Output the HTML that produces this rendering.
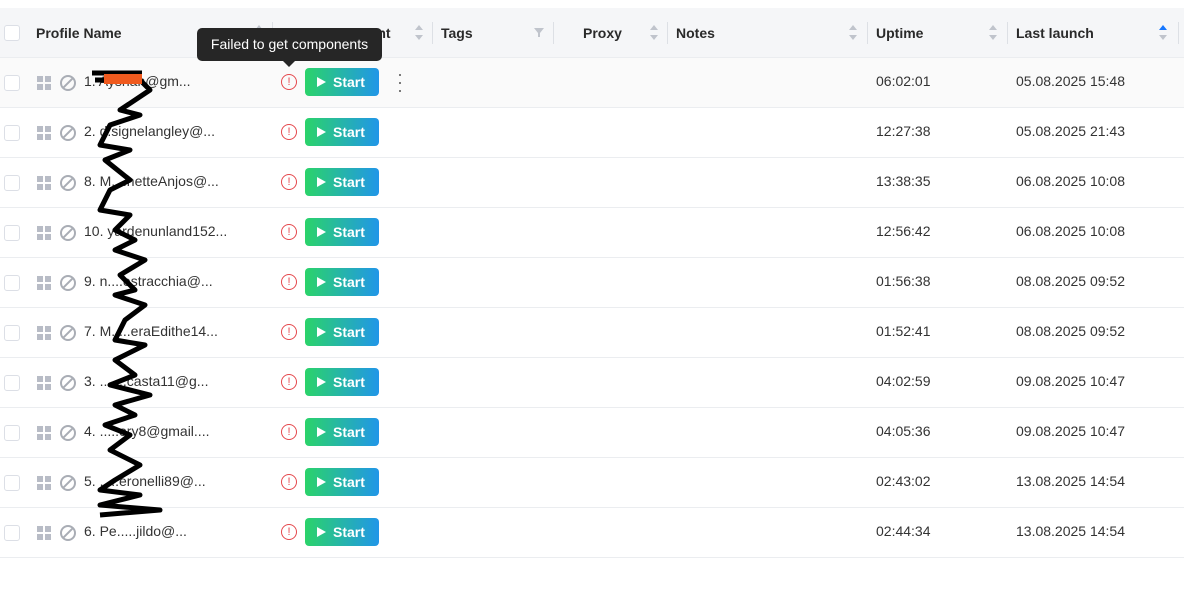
<!DOCTYPE html><html><head><style>
body{margin:0;width:1186px;height:593px;background:#fff;font-family:"Liberation Sans",sans-serif;position:relative;overflow:hidden;color:#333}
.hdr{position:absolute;left:0;top:8px;width:1184px;height:49px;background:#f5f6f8;border-bottom:1px solid #ebedf0}
.h{position:absolute;top:24px;font-size:14px;font-weight:bold;color:#2a2a2a}
.sep{position:absolute;top:22px;width:1px;height:22px;background:#dde0e5}
.row{position:absolute;left:0;width:1184px;height:49px;border-bottom:1px solid #ebedf0;font-size:14px}
.cb{position:absolute;left:4px;top:17px;width:14px;height:14px;border:1px solid #dcdfe6;border-radius:3px;background:#fff}
.grid{position:absolute;left:37px;top:18px;width:14px;height:14px}
.grid i{position:absolute;width:6px;height:6px;background:#b8bcc6}
.ban{position:absolute;left:60px;top:17px;width:12px;height:12px;border:2px solid #a9adb5;border-radius:50%}
.ban:after{content:"";position:absolute;left:5px;top:-1px;width:2px;height:14px;background:#a9adb5;transform:rotate(45deg)}
.nm{position:absolute;left:84px;top:15px;color:#333}
.al{position:absolute;left:281px;top:16px;width:14px;height:14px;border:1.5px solid #e5484d;border-radius:50%;color:#e5484d;font-size:11px;text-align:center;line-height:14px}
.st{position:absolute;left:305px;top:10px;width:74px;height:28px;border-radius:4px;background:linear-gradient(90deg,#2bd36a,#2196e8);color:#fff;font-weight:bold;font-size:14px;line-height:28px}
.st:before{content:"";position:absolute;left:12px;top:9px;border-left:9px solid #fff;border-top:5px solid transparent;border-bottom:5px solid transparent}
.st span{position:absolute;left:28px}
.up{position:absolute;left:876px;top:15px}
.ll{position:absolute;left:1016px;top:15px}
.tip{position:absolute;left:197px;top:28px;width:185px;height:33px;background:#262626;border-radius:5px;color:#fff;font-size:14px;line-height:33px;text-align:center;z-index:5}
.tip:after{content:"";position:absolute;left:86px;top:33px;border-top:6px solid #262626;border-left:6px solid transparent;border-right:6px solid transparent}
</style></head><body>
<div class="hdr">
<div class="cb" style="top:17px"></div>
<div class="h" style="left:36px;top:17px">Profile Name</div>
<div class="h" style="left:305px;top:17px">Management</div>
<div class="h" style="left:441px;top:17px">Tags</div>
<div class="h" style="left:583px;top:17px">Proxy</div>
<div class="h" style="left:676px;top:17px">Notes</div>
<div class="h" style="left:876px;top:17px">Uptime</div>
<div class="h" style="left:1016px;top:17px">Last launch</div>
<div class="sep" style="left:272px;top:14px"></div><div class="sep" style="left:432px;top:14px"></div><div class="sep" style="left:553px;top:14px"></div><div class="sep" style="left:667px;top:14px"></div><div class="sep" style="left:867px;top:14px"></div><div class="sep" style="left:1007px;top:14px"></div><div class="sep" style="left:1178px;top:14px"></div>
<svg style="position:absolute;left:0;top:0" width="1184" height="49">
<g fill="#c0c4cc"><path d="M255 22l4-5 4 5zM255 27l4 5 4-5z"/><path d="M415 22l4-5 4 5zM415 27l4 5 4-5z"/><path d="M650 22l4-5 4 5zM650 27l4 5 4-5z"/><path d="M849 22l4-5 4 5zM849 27l4 5 4-5z"/><path d="M989 22l4-5 4 5zM989 27l4 5 4-5z"/><path d="M1159 27l4 5 4-5z"/><path d="M534 20h10l-4 5v4h-2v-4z"/></g>
<path fill="#1677ff" d="M1159 22l4-5 4 5z"/></svg>
</div>
<div class="tip">Failed to get components</div>
<div class="row" style="top:58px;background:#fafafa"><div class="cb"></div><div class="grid"><i style="left:0;top:0"></i><i style="left:8px;top:0"></i><i style="left:0;top:8px"></i><i style="left:8px;top:8px"></i></div><div class="ban"></div><div class="nm">1. Ayshah@gm...</div><div class="al">!</div><div class="st"><span>Start</span></div><div style="position:absolute;left:397px;top:12px;font-size:18px;color:#666;line-height:8px">·<br>·<br>·</div><div class="up">06:02:01</div><div class="ll">05.08.2025 15:48</div></div>
<div class="row" style="top:108px"><div class="cb"></div><div class="grid"><i style="left:0;top:0"></i><i style="left:8px;top:0"></i><i style="left:0;top:8px"></i><i style="left:8px;top:8px"></i></div><div class="ban"></div><div class="nm">2. d.signelangley@...</div><div class="al">!</div><div class="st"><span>Start</span></div><div class="up">12:27:38</div><div class="ll">05.08.2025 21:43</div></div>
<div class="row" style="top:158px"><div class="cb"></div><div class="grid"><i style="left:0;top:0"></i><i style="left:8px;top:0"></i><i style="left:0;top:8px"></i><i style="left:8px;top:8px"></i></div><div class="ban"></div><div class="nm">8. M....netteAnjos@...</div><div class="al">!</div><div class="st"><span>Start</span></div><div class="up">13:38:35</div><div class="ll">06.08.2025 10:08</div></div>
<div class="row" style="top:208px"><div class="cb"></div><div class="grid"><i style="left:0;top:0"></i><i style="left:8px;top:0"></i><i style="left:0;top:8px"></i><i style="left:8px;top:8px"></i></div><div class="ban"></div><div class="nm">10. yardenunland152...</div><div class="al">!</div><div class="st"><span>Start</span></div><div class="up">12:56:42</div><div class="ll">06.08.2025 10:08</div></div>
<div class="row" style="top:258px"><div class="cb"></div><div class="grid"><i style="left:0;top:0"></i><i style="left:8px;top:0"></i><i style="left:0;top:8px"></i><i style="left:8px;top:8px"></i></div><div class="ban"></div><div class="nm">9. n....estracchia@...</div><div class="al">!</div><div class="st"><span>Start</span></div><div class="up">01:56:38</div><div class="ll">08.08.2025 09:52</div></div>
<div class="row" style="top:308px"><div class="cb"></div><div class="grid"><i style="left:0;top:0"></i><i style="left:8px;top:0"></i><i style="left:0;top:8px"></i><i style="left:8px;top:8px"></i></div><div class="ban"></div><div class="nm">7. M.....eraEdithe14...</div><div class="al">!</div><div class="st"><span>Start</span></div><div class="up">01:52:41</div><div class="ll">08.08.2025 09:52</div></div>
<div class="row" style="top:358px"><div class="cb"></div><div class="grid"><i style="left:0;top:0"></i><i style="left:8px;top:0"></i><i style="left:0;top:8px"></i><i style="left:8px;top:8px"></i></div><div class="ban"></div><div class="nm">3. .......casta11@g...</div><div class="al">!</div><div class="st"><span>Start</span></div><div class="up">04:02:59</div><div class="ll">09.08.2025 10:47</div></div>
<div class="row" style="top:408px"><div class="cb"></div><div class="grid"><i style="left:0;top:0"></i><i style="left:8px;top:0"></i><i style="left:0;top:8px"></i><i style="left:8px;top:8px"></i></div><div class="ban"></div><div class="nm">4. .....ory8@gmail....</div><div class="al">!</div><div class="st"><span>Start</span></div><div class="up">04:05:36</div><div class="ll">09.08.2025 10:47</div></div>
<div class="row" style="top:458px"><div class="cb"></div><div class="grid"><i style="left:0;top:0"></i><i style="left:8px;top:0"></i><i style="left:0;top:8px"></i><i style="left:8px;top:8px"></i></div><div class="ban"></div><div class="nm">5. .....eronelli89@...</div><div class="al">!</div><div class="st"><span>Start</span></div><div class="up">02:43:02</div><div class="ll">13.08.2025 14:54</div></div>
<div class="row" style="top:508px"><div class="cb"></div><div class="grid"><i style="left:0;top:0"></i><i style="left:8px;top:0"></i><i style="left:0;top:8px"></i><i style="left:8px;top:8px"></i></div><div class="ban"></div><div class="nm">6. Pe.....jildo@...</div><div class="al">!</div><div class="st"><span>Start</span></div><div class="up">02:44:34</div><div class="ll">13.08.2025 14:54</div></div>
<svg style="position:absolute;left:0;top:0;z-index:3" width="1186" height="593"><path d="M92 73h50M95 80h45l10 10-30 20 20 5-30 10-10 20 30 5-25 10 25 20-20 10-10 20 30 5-15 15 20 10-20 10 30 10-25 15 15 15-20 5 30 10-20 15-10 20 30 5-30 15 20 15-25 10 40 10-35 10 20 10-30 10 25 10-20 15 30 15-25 15-15 10 40 5-40 10 60 5-60 5" fill="none" stroke="#000" stroke-width="5" stroke-linejoin="round"/><rect x="104" y="74" width="38" height="10" fill="#f05a1e"/></svg>
</body></html>
